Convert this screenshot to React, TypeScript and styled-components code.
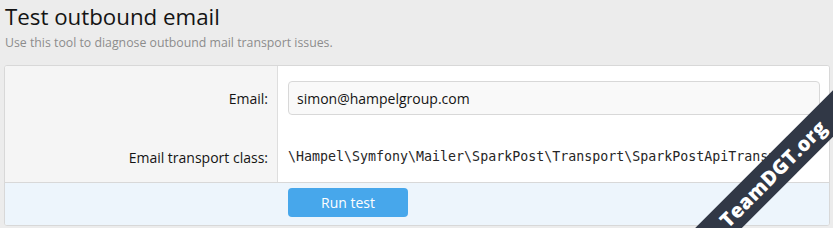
import React from "react";
import styled, { createGlobalStyle } from "styled-components";

const Global = createGlobalStyle`
  html, body { margin: 0; padding: 0; }
  body {
    background: #ececec;
    font-family: "Open Sans", "Noto Sans", sans-serif;
    color: #141414;
    overflow: hidden;
  }
  * { box-sizing: border-box; }
`;

const Page = styled.div`
  position: relative;
  width: 833px;
  height: 228px;
  padding: 0 3px 0 4px;
  overflow: hidden;
`;

const Header = styled.div`
  padding: 2px 1px 0 1px;
  height: 65px;
`;

const Title = styled.h1`
  margin: 0;
  font-size: 22.3px;
  font-weight: 400;
  line-height: 30px;
  color: #141414;
`;

const Description = styled.div`
  margin-top: 2px;
  font-size: 12.3px;
  line-height: 18px;
  color: #8c8c8c;
`;

const Panel = styled.div`
  border: 1px solid #d8d8d8;
  border-radius: 3px;
  background: #fff;
  overflow: hidden;
`;

const Body = styled.div`
  padding: 5px 0 5px 0;
  background: linear-gradient(to right, #f5f5f5 0, #f5f5f5 272px, #dedede 272px, #dedede 273px, #fff 273px);
`;

const Row = styled.div<{ $top: number; $bottom: number }>`
  display: grid;
  grid-template-columns: 273px 1fr;
  padding-top: ${(p) => p.$top}px;
  padding-bottom: ${(p) => p.$bottom}px;
`;

const Label = styled.div`
  text-align: right;
  padding-right: 10px;
  font-size: 14px;
  color: #141414;
  display: flex;
  align-items: center;
  justify-content: flex-end;
`;

const Value = styled.div`
  padding: 0 9px 0 10px;
  display: flex;
  align-items: center;
  min-width: 0;
`;

const Input = styled.input`
  width: 100%;
  height: 34px;
  border: 1px solid #d8d8d8;
  border-radius: 4px;
  background: #f9f9f9;
  padding: 0 8px;
  font-family: "Open Sans", "Noto Sans", sans-serif;
  font-size: 14px;
  color: #141414;
  outline: none;
`;

const Code = styled.div`
  font-family: "DejaVu Sans Mono", monospace;
  font-size: 13.3px;
  line-height: 20px;
  color: #262626;
  white-space: nowrap;
  overflow: hidden;
`;

const Footer = styled.div`
  border-top: 1px solid #d8d8d8;
  background: #edf5fc;
  padding: 5px 0 8px 283px;
  height: 43px;
`;

const Button = styled.button`
  width: 120px;
  height: 29px;
  border: none;
  border-radius: 4px;
  background: #47a7eb;
  color: #fefefe;
  font-family: "Open Sans", "Noto Sans", sans-serif;
  font-size: 14px;
  cursor: pointer;
`;

const Ribbon = styled.div`
  position: absolute;
  left: 573px;
  top: 157px;
  width: 400px;
  height: 33px;
  background: #313846;
  color: #fff;
  transform: rotate(-45deg);
  display: flex;
  align-items: center;
  justify-content: center;
  font-family: "Open Sans", "Noto Sans", sans-serif;
  font-weight: 800;
  font-size: 20px;
  letter-spacing: 0.3px;
`;

export default function App() {
  return (
    <>
      <Global />
      <Page>
        <Header>
          <Title>Test outbound email</Title>
          <Description>Use this tool to diagnose outbound mail transport issues.</Description>
        </Header>
        <Panel>
          <Body>
            <Row $top={10} $bottom={10}>
              <Label>Email:</Label>
              <Value>
                <Input defaultValue="simon@hampelgroup.com" />
              </Value>
            </Row>
            <Row $top={22} $bottom={10}>
              <Label>Email transport class:</Label>
              <Value>
                <Code>\Hampel\Symfony\Mailer\SparkPost\Transport\SparkPostApiTransport</Code>
              </Value>
            </Row>
          </Body>
          <Footer>
            <Button>Run test</Button>
          </Footer>
        </Panel>
        <Ribbon>TeamDGT.org</Ribbon>
      </Page>
    </>
  );
}
